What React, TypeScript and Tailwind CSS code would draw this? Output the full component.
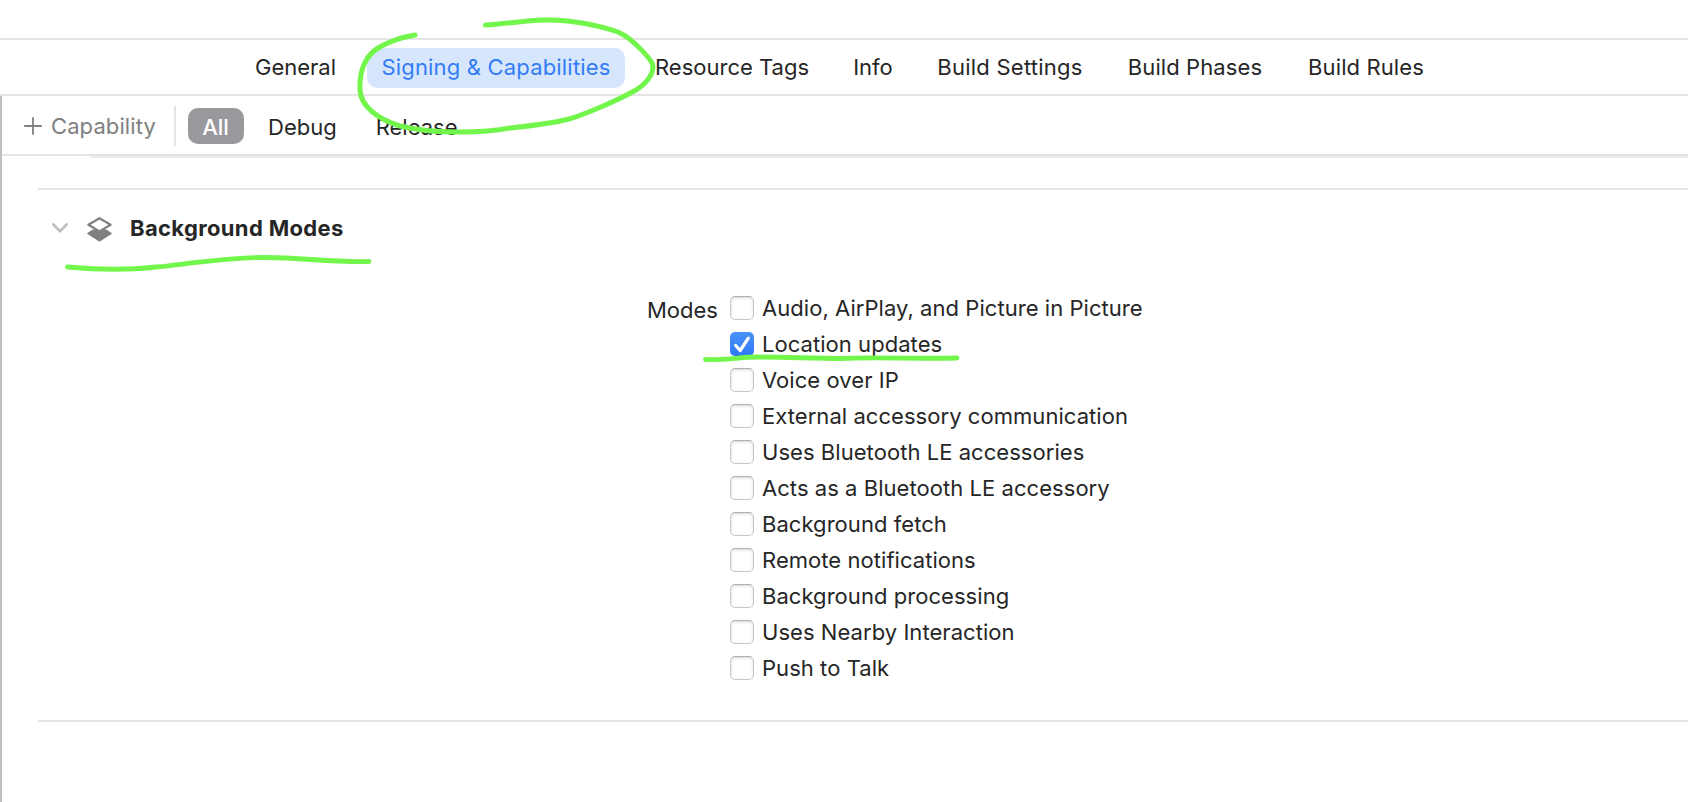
import React from "react";

const tabs = [
  { label: "General", width: "w-[111px]" },
  { label: "Signing & Capabilities", width: "w-[258px] tracking-[0.18px]", active: true },
  { label: "Resource Tags", width: "w-[182px]" },
  { label: "Info", width: "w-[68px]" },
  { label: "Build Settings", width: "w-[174px] tracking-[0.25px]" },
  { label: "Build Phases", width: "w-[164px] tracking-[0.1px]" },
  { label: "Build Rules", width: "w-[146px] tracking-[0.1px]" },
];

const modes = [
  { label: "Audio, AirPlay, and Picture in Picture" },
  { label: "Location updates", checked: true },
  { label: "Voice over IP" },
  { label: "External accessory communication" },
  { label: "Uses Bluetooth LE accessories" },
  { label: "Acts as a Bluetooth LE accessory" },
  { label: "Background fetch" },
  { label: "Remote notifications" },
  { label: "Background processing" },
  { label: "Uses Nearby Interaction" },
  { label: "Push to Talk" },
];

function Checkbox({ checked }: { checked?: boolean }) {
  if (checked) {
    return (
      <span className="flex h-6 w-6 shrink-0 rounded-[5px] bg-linear-to-b from-[#4a93fa] to-[#2f78f6]">
        <svg viewBox="0 0 24 24" className="h-6 w-6" fill="none" stroke="#fff" strokeWidth="3.200" strokeLinecap="round" strokeLinejoin="round">
          <path d="M5.700 13.500 10.200 18.500 18.300 6.200" />
        </svg>
      </span>
    );
  }
  return (
    <span className="h-6 w-6 shrink-0 rounded-[5px] border border-[#c8c8c8] border-t-[#b0b0b0] bg-white shadow-[inset_0_1px_3px_#d6d6d6]" />
  );
}

function Annotations() {
  return (
    <svg
      className="pointer-events-none absolute top-0 left-0 h-[802px] w-[1688px]"
      viewBox="0 0 1688 802"
      fill="none"
      stroke="#73f64b"
      strokeLinecap="round"
      strokeLinejoin="round"
    >
      <path
        strokeWidth="5"
        d="M485.500 25C505 24 523 20.500 545 20C575 19.500 604 27 618 32C634 39 651 60 652.500 64C655 73 646 84 636 90C613 103 580 116 569 119C550 124 528 126 510 128C495 131 480 132 460 132C435 132.500 417 130 400 126C378 119 361 107 360 90C359 72 365 56 378 48C390 41 402 37 415 35"
      />
      <path strokeWidth="4.800" d="M67.500 267C95 269.500 130 270 156 267C180 265 220 258 262 257.500C300 257 328 262.500 369 261.500" />
      <path strokeWidth="4.800" d="M705.500 359.500C728 360.500 738 357 757 357C785 357 815 358.500 841 358.500C870 357 920 359 957 358" />
    </svg>
  );
}

export default function App() {
  return (
    <div className="relative flex h-[802px] w-full flex-col overflow-hidden bg-white font-['Inter',sans-serif] text-[22px] leading-7 whitespace-nowrap text-[#262626]">
      <div className="h-[38px] shrink-0" />
      <nav className="flex h-[58px] shrink-0 items-center gap-4 border-y-2 border-[#e4e4e4] pt-[2px] pl-[240px]">
        {tabs.map((t) => (
          <button
            key={t.label}
            className={`flex h-10 shrink-0 items-center justify-center rounded-[10px] pb-[2px] ${t.width} ${
              t.active ? "bg-[#d6e6fd] text-[#337cf6]" : ""
            }`}
          >
            {t.label}
          </button>
        ))}
      </nav>
      <div className="flex grow flex-col border-l-2 border-[#bfbfbf]">
        <div className="flex h-[60px] shrink-0 items-center border-b-2 border-[#e4e4e4] pt-[2px]">
          <button className="flex items-center pl-[22px] text-[#808080]">
            <svg viewBox="0 0 18 18" className="mr-[9px] h-[18px] w-[18px]" stroke="#808080" strokeWidth="1.800" strokeLinecap="round">
              <path d="M9 .9V17.100M.9 9H17.100" />
            </svg>
            <span className="w-[122px] text-left tracking-[0.1px]">Capability</span>
          </button>
          <div className="ml-[1px] h-10 w-[2px] bg-[#e4e4e4]" />
          <button className="ml-3 flex h-9 w-14 items-center justify-center rounded-[10px] bg-[#99989d] pt-[2px] pr-[1px] font-medium text-white">All</button>
          <button className="ml-6 pt-[2px]">Debug</button>
          <button className="ml-[39px] pt-[2px]">Release</button>
        </div>
        <div className="ml-[88px] h-[2px] shrink-0 rounded-bl-[4px] bg-[#ededed]" />
        <section className="mt-[30px] ml-9 flex h-[534px] shrink-0 flex-col border-y-2 border-[#e4e4e4]">
          <header className="mt-6 flex h-7 items-center pl-[14px]">
            <svg viewBox="0 0 16 10" className="mr-[19px] h-[10px] w-4" fill="none" stroke="#bfbfbf" strokeWidth="2.700" strokeLinecap="round" strokeLinejoin="round">
              <path d="M1.400 1.500 8 8.200 14.600 1.500" />
            </svg>
            <svg viewBox="0 0 25 26" className="mt-[2px] mr-[18px] h-[26px] w-[25px]" strokeLinejoin="round">
              <path d="M.8 17.500 6 14H19L24.200 17.500 12.500 25Z" fill="#808080" stroke="#808080" strokeWidth="1.200" />
              <path d="M1.400 8.800 12.500 2.200 23.600 8.800 12.500 15.400Z" fill="#fff" stroke="#808080" strokeWidth="2.200" />
            </svg>
            <h2 className="font-bold tracking-[0.35px]">Background Modes</h2>
          </header>
          <div className="mt-12 flex pl-[609px]">
            <span className="mt-[6px] w-[83px]">Modes</span>
            <ul className="flex flex-col tracking-[0.05px]">
              {modes.map((m) => (
                <li key={m.label} className="flex h-9 items-center gap-2">
                  <Checkbox checked={m.checked} />
                  <span>{m.label}</span>
                </li>
              ))}
            </ul>
          </div>
        </section>
      </div>
      <Annotations />
    </div>
  );
}
